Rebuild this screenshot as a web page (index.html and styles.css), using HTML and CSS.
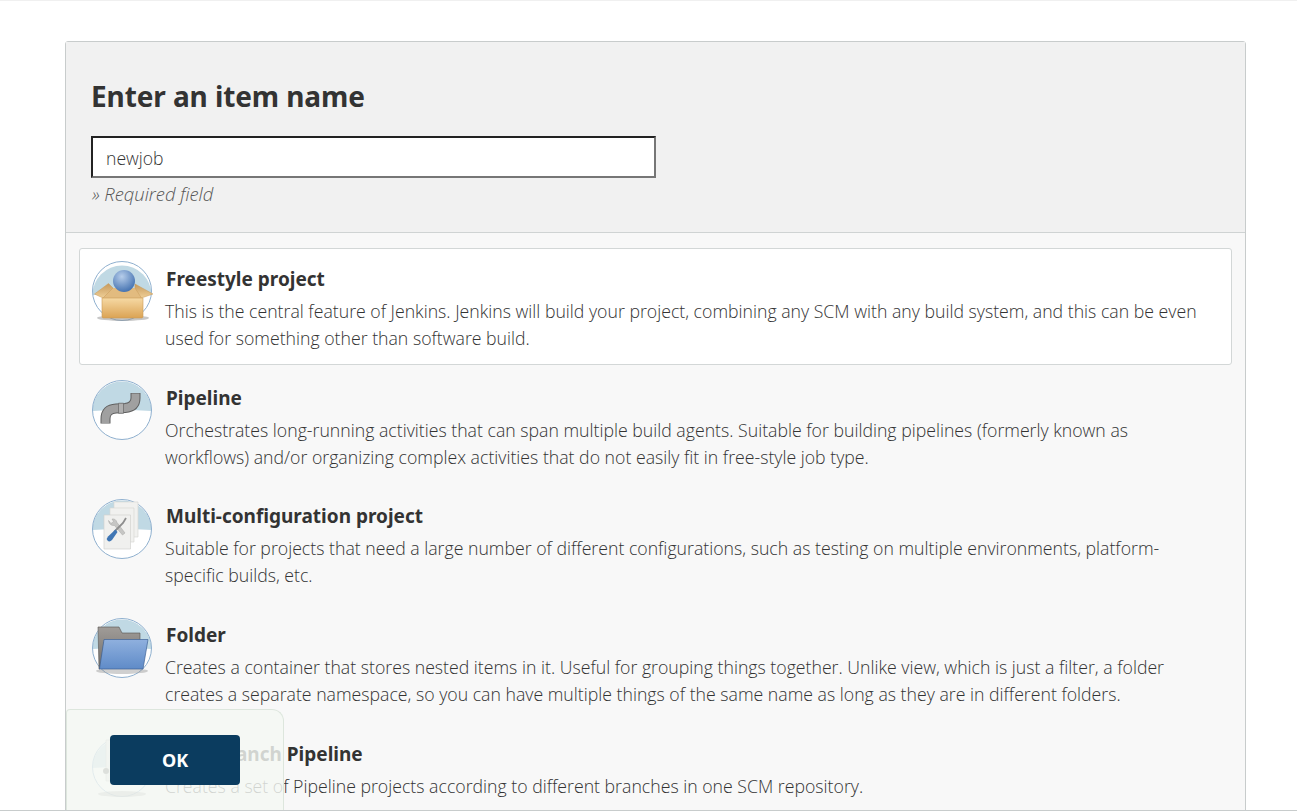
FILE: index.html
```html
<!DOCTYPE html>
<html lang="en">
<head>
    <meta charset="UTF-8">
    <meta name="viewport" content="width=device-width, initial-scale=1.0">
    <title>New Item</title>
    <link rel="stylesheet" href="styles.css">
</head>
<body>
<div class="page">
    <form class="panel">
        <div class="header">
            <h2 class="header-title">Enter an item name</h2>
            <input class="name-input" type="text" value="newjob">
            <div class="required">» Required field</div>
        </div>

        <div class="categories">
            <div class="item item-selected">
                <svg class="item-icon" viewBox="0 0 60 60">
                    <defs>
                        <radialGradient id="ball" cx="40%" cy="30%" r="75%"><stop offset="0" stop-color="#b6cdea"/><stop offset="1" stop-color="#3f6eae"/></radialGradient>
                        <linearGradient id="box" x1="0" y1="0" x2="0" y2="1"><stop offset="0" stop-color="#f6d9a4"/><stop offset="1" stop-color="#dba354"/></linearGradient>
                        <linearGradient id="boxtop" x1="0" y1="0" x2="0" y2="1"><stop offset="0" stop-color="#c79a5c"/><stop offset="1" stop-color="#efcf97"/></linearGradient>
                    </defs>
                    <circle cx="30" cy="30" r="29.5" fill="#fff"/>
                    <path d="M.5 34A29.5 29.5 0 0 1 59.5 34Z" fill="#c0d9e4"/>
                    <circle cx="30" cy="30" r="29.5" fill="none" stroke="#8fb0cf"/>
                    <ellipse cx="31" cy="57" rx="26" ry="3" fill="#8f8f8f" opacity=".5"/>
                    <path d="M20 27H44L50 37H10Z" fill="#e2bb7f"/>
                    <circle cx="32" cy="20" r="11" fill="url(#ball)"/>
                    <path d="M11 37 2.500 33 16.500 22.500 21 27Z" fill="url(#boxtop)" stroke="#c89a58" stroke-width=".5"/>
                    <path d="M49.500 37 61 33 43 23 43 27Z" fill="url(#boxtop)" stroke="#c89a58" stroke-width=".5"/>
                    <path d="M10 37H51V55.500Q51 57 49.500 57H11.500Q10 57 10 55.500Z" fill="url(#box)" stroke="#c99a58" stroke-width=".6"/>
                </svg>
                <div class="item-body">
                    <div class="item-title">Freestyle project</div>
                    <div class="item-desc">This is the central feature of Jenkins. Jenkins will build your project, combining any SCM with any build system, and this can be even used for something other than software build.</div>
                </div>
            </div>

            <div class="item">
                <svg class="item-icon" viewBox="0 0 60 60">
                    <circle cx="30" cy="30" r="29.5" fill="#fff"/>
                    <path d="M.5 31Q30 29 59.5 31A29.5 29.5 0 0 0 .5 31Z" fill="#c0d9e4"/>
                    <circle cx="30" cy="30" r="29.5" fill="none" stroke="#8fb0cf"/>
                    <path d="M13.500 43.500V39Q13.500 29 24 28.500L33 28Q43.500 27 43.500 18V13" fill="none" stroke="#5f5f5f" stroke-width="10"/>
                    <path d="M13.500 43V39Q13.500 29 24 28.500L33 28Q43.500 27 43.500 18V13.500" fill="none" stroke="#a0a0a0" stroke-width="8"/>
                    <path d="M26.500 23.200H31.500V33.300H26.500Z" fill="#b0b0b0" stroke="#666" stroke-width=".7"/>
                </svg>
                <div class="item-body">
                    <div class="item-title">Pipeline</div>
                    <div class="item-desc">Orchestrates long-running activities that can span multiple build agents. Suitable for building pipelines (formerly known as workflows) and/or organizing complex activities that do not easily fit in free-style job type.</div>
                </div>
            </div>

            <div class="item">
                <svg class="item-icon" viewBox="0 0 60 60">
                    <circle cx="30" cy="30" r="29.5" fill="#fff"/>
                    <path d="M.5 31Q30 29 59.5 31A29.500 29.500 0 0 0 .5 31Z" fill="#c0d9e4"/>
                    <circle cx="30" cy="30" r="29.500" fill="none" stroke="#8fb0cf"/>
                    <path d="M22 3H46V38H22Z" fill="#f1f1ef" stroke="#d8d8d6" stroke-width=".7"/>
                    <path d="M18 9H42V43H18Z" fill="#f1f1ef" stroke="#d8d8d6" stroke-width=".7"/>
                    <path d="M12 16H38.500V50H12Z" fill="#f0f0ee" stroke="#d2d2d0" stroke-width=".7"/>
                    <path d="M16.500 21.500 19 24.500 21.500 22.500 20 20Q24 19.500 25 23.500L33 34 30.500 36 22.500 26.500Q17.500 27 16.500 21.500Z" fill="#c6c6c4" stroke="#a5a5a3" stroke-width=".5"/>
                    <path d="M34 19 31 24 22 33" fill="none" stroke="#8d8d8d" stroke-width="1.800"/>
                    <path d="M23.500 30.500 25.500 33 20 41Q17.500 43.500 15.500 41.500 14 39.500 16 37.500Z" fill="#3f76b4"/>
                </svg>
                <div class="item-body">
                    <div class="item-title">Multi-configuration project</div>
                    <div class="item-desc">Suitable for projects that need a large number of different configurations, such as testing on multiple environments, platform-specific builds, etc.</div>
                </div>
            </div>

            <div class="item">
                <svg class="item-icon" viewBox="0 0 60 60">
                    <defs>
                        <linearGradient id="folder" x1="0" y1="0" x2="0" y2="1"><stop offset="0" stop-color="#8fb0de"/><stop offset="1" stop-color="#5f8bc8"/></linearGradient>
                        <linearGradient id="folderback" x1="0" y1="0" x2="0" y2="1"><stop offset="0" stop-color="#a09c98"/><stop offset="1" stop-color="#6f6c69"/></linearGradient>
                    </defs>
                    <circle cx="30" cy="30" r="29.500" fill="#fff"/>
                    <path d="M.5 31Q30 29 59.500 31A29.500 29.500 0 0 0 .5 31Z" fill="#c0d9e4"/>
                    <circle cx="30" cy="30" r="29.500" fill="none" stroke="#8fb0cf"/>
                    <ellipse cx="30" cy="53" rx="26" ry="3" fill="#8a8a8a" opacity=".4"/>
                    <path d="M6 9H27L30 15H48V24H12L8 51H7Z" fill="url(#folderback)" stroke="#55534f" stroke-width=".6"/>
                    <path d="M12 21.500H56L51 51H7.500Z" fill="url(#folder)" stroke="#3f6396" stroke-width=".7"/>
                </svg>
                <div class="item-body">
                    <div class="item-title">Folder</div>
                    <div class="item-desc">Creates a container that stores nested items in it. Useful for grouping things together. Unlike view, which is just a filter, a folder creates a separate namespace, so you can have multiple things of the same name as long as they are in different folders.</div>
                </div>
            </div>

            <div class="item">
                <svg class="item-icon" viewBox="0 0 60 60">
                    <circle cx="30" cy="30" r="29.500" fill="#fff"/>
                    <path d="M.5 31Q30 29 59.500 31A29.500 29.500 0 0 0 .5 31Z" fill="#c0d9e4"/>
                    <circle cx="30" cy="30" r="29.500" fill="none" stroke="#8fb0cf"/>
                    <path d="M14 3H46V44H14Z" fill="#e6e6e6" stroke="#bbb" stroke-width=".7"/>
                    <circle cx="14" cy="34" r="3" fill="#777"/>
                    <ellipse cx="30" cy="57" rx="24" ry="3" fill="#8a8a8a" opacity=".5"/>
                </svg>
                <div class="item-body">
                    <div class="item-title">Multibranch Pipeline</div>
                    <div class="item-desc">Creates a set of Pipeline projects according to different branches in one SCM repository.</div>
                </div>
            </div>
        </div>
    </form>

    <div class="footer">
        <button class="ok-button" type="button">OK</button>
    </div>
</div>
</body>
</html>
```

FILE: styles.css
```css
html, body {
    height: 100%;
    margin: 0;
    padding: 0;
    overflow: hidden;
    background-color: white;
}

body {
    color: #333;
    font-family: "Noto Sans", "Open Sans", sans-serif;
    font-size: 16px;
}

.page {
    position: relative;
    box-sizing: border-box;
    height: 811px;
    padding: 40px 51px 0 65px;
    border-top: 1px solid #f0f0f0;
    border-bottom: 1px solid #c8cccc;
    overflow: hidden;
}

.panel {
    border: 1px solid #c8cccc;
    border-radius: 3px;
    background-color: #f8f8f8;
}

.header {
    height: 191px;
    box-sizing: border-box;
    padding: 35px 25px 0;
    background-color: #f1f1f1;
    border-bottom: 1px solid #cfd3d3;
}

.header-title {
    margin: 0 0 21px;
    font-size: 28px;
    line-height: 38px;
    font-weight: 700;
    letter-spacing: -0.1px;
    color: #333;
}

.name-input {
    display: block;
    box-sizing: border-box;
    width: 565px;
    height: 42px;
    padding: 1px 13px 0;
    border-width: 2px;
    border-style: solid;
    border-color: #222 #767676 #767676 #222;
    background-color: white;
    color: #333;
    font-family: "Open Sans", sans-serif;
    font-size: 17.6px;
    font-weight: 300;
}

.required {
    margin-top: 2px;
    padding-left: 1px;
    font-family: "Open Sans", serif;
    font-style: italic;
    font-weight: 300;
    font-size: 18.4px;
    line-height: 27px;
    color: #555;
}

.categories {
    padding: 15.4px 13px 0;
}

.item {
    display: flex;
    gap: 13px;
    padding: 12px 26px 12.5px 12px;
    margin-bottom: 1.8px;
    border: 1px solid transparent;
    border-radius: 3px;
}

.item-selected {
    background-color: white;
    border-color: #d3d7d7;
}

.item-icon {
    flex: none;
    width: 60px;
    height: 60px;
    overflow: visible;
}

.item-body {
    padding-top: 4.5px;
}

.item-title {
    font-family: "Noto Sans", sans-serif;
    font-size: 19px;
    line-height: 27px;
    font-weight: 700;
    margin: 0 0 5px 1px;
}

.item-desc {
    font-family: "Open Sans", sans-serif;
    font-weight: 300;
    font-size: 17.7px;
    line-height: 27px;
}

.footer {
    position: absolute;
    left: 66px;
    top: 708px;
    box-sizing: border-box;
    width: 218px;
    height: 102px;
    padding: 25px 43px;
    background-color: rgba(244, 248, 243, 0.82);
    border: 1px solid #dde6dd;
    border-bottom: none;
    border-top-left-radius: 4px;
    border-top-right-radius: 12px;
}

.ok-button {
    display: block;
    width: 130px;
    height: 50px;
    border: none;
    border-radius: 4px;
    background-color: #0b3c5f;
    color: white;
    font-family: "Noto Sans", sans-serif;
    font-size: 18px;
    font-weight: 700;
}
```
